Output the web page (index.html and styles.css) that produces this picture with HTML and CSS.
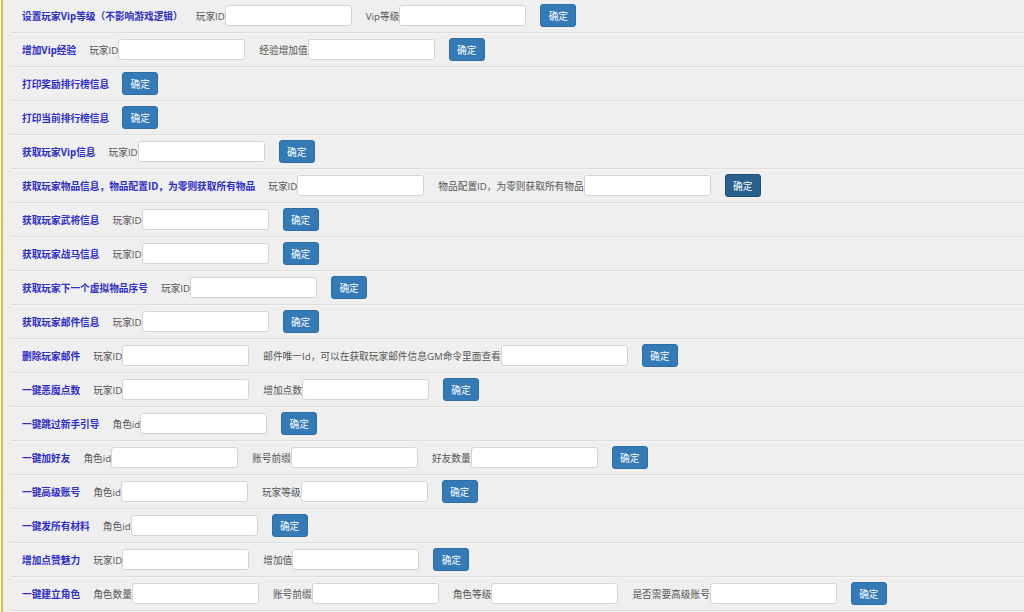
FILE: index.html
```html
<!DOCTYPE html>
<html lang="zh-CN">
<head>
<meta charset="utf-8">
<title>GM</title>
<link rel="stylesheet" href="styles.css">
</head>
<body>
<div class="page">
  <div class="row first"><span class="title">设置玩家Vip等级（不影响游戏逻辑）</span><span class="fl">玩家ID</span><input class="inp"><span class="fl">Vip等级</span><input class="inp"><button class="btn">确定</button></div>
  <div class="row"><span class="title">增加Vip经验</span><span class="fl">玩家ID</span><input class="inp"><span class="fl">经验增加值</span><input class="inp"><button class="btn">确定</button></div>
  <div class="row"><span class="title">打印奖励排行榜信息</span><button class="btn">确定</button></div>
  <div class="row"><span class="title">打印当前排行榜信息</span><button class="btn">确定</button></div>
  <div class="row"><span class="title">获取玩家Vip信息</span><span class="fl">玩家ID</span><input class="inp"><button class="btn">确定</button></div>
  <div class="row"><span class="title">获取玩家物品信息，物品配置ID，为零则获取所有物品</span><span class="fl">玩家ID</span><input class="inp"><span class="fl">物品配置ID，为零则获取所有物品</span><input class="inp"><button class="btn active">确定</button></div>
  <div class="row"><span class="title">获取玩家武将信息</span><span class="fl">玩家ID</span><input class="inp"><button class="btn">确定</button></div>
  <div class="row"><span class="title">获取玩家战马信息</span><span class="fl">玩家ID</span><input class="inp"><button class="btn">确定</button></div>
  <div class="row"><span class="title">获取玩家下一个虚拟物品序号</span><span class="fl">玩家ID</span><input class="inp"><button class="btn">确定</button></div>
  <div class="row"><span class="title">获取玩家邮件信息</span><span class="fl">玩家ID</span><input class="inp"><button class="btn">确定</button></div>
  <div class="row"><span class="title">删除玩家邮件</span><span class="fl">玩家ID</span><input class="inp"><span class="fl">邮件唯一Id，可以在获取玩家邮件信息GM命令里面查看</span><input class="inp"><button class="btn">确定</button></div>
  <div class="row"><span class="title">一键恶魔点数</span><span class="fl">玩家ID</span><input class="inp"><span class="fl">增加点数</span><input class="inp"><button class="btn">确定</button></div>
  <div class="row"><span class="title">一键跳过新手引导</span><span class="fl">角色id</span><input class="inp"><button class="btn">确定</button></div>
  <div class="row"><span class="title">一键加好友</span><span class="fl">角色id</span><input class="inp"><span class="fl">账号前缀</span><input class="inp"><span class="fl">好友数量</span><input class="inp"><button class="btn">确定</button></div>
  <div class="row"><span class="title">一键高级账号</span><span class="fl">角色id</span><input class="inp"><span class="fl">玩家等级</span><input class="inp"><button class="btn">确定</button></div>
  <div class="row"><span class="title">一键发所有材料</span><span class="fl">角色id</span><input class="inp"><button class="btn">确定</button></div>
  <div class="row"><span class="title">增加点赞魅力</span><span class="fl">玩家ID</span><input class="inp"><span class="fl">增加值</span><input class="inp"><button class="btn">确定</button></div>
  <div class="row"><span class="title">一键建立角色</span><span class="fl">角色数量</span><input class="inp"><span class="fl">账号前缀</span><input class="inp"><span class="fl">角色等级</span><input class="inp"><span class="fl">是否需要高级账号</span><input class="inp"><button class="btn">确定</button></div>
</div>
</body>
</html>
```

FILE: styles.css
```css
html {
  background: #ffffff;
}
body {
  margin: 0 0 0 1px;
  background: #efefef;
  border-left: 2px solid #d6c53c;
  min-height: 612px;
  font-family: "Open Sans", "Noto Sans CJK SC", sans-serif;
  font-size: 9.7px;
  overflow: hidden;
}
.page {
  margin-left: 8px;
  margin-top: -1px;
}
.row {
  box-sizing: border-box;
  height: 34px;
  display: flex;
  align-items: center;
  padding-left: 11px;
  border-bottom: 1px solid #dcdcdc;
  box-shadow: 0 1px 0 #f6f6f6;
}
.title {
  color: #2d2dc8;
  font-weight: bold;
  margin-right: 13px;
  white-space: nowrap;
}
.fl {
  color: #555555;
  white-space: nowrap;
}
.inp {
  box-sizing: border-box;
  width: 127px;
  height: 21px;
  margin: 0 14px 0 0;
  padding: 0 4px;
  background: #ffffff;
  border: 1px solid #d4d4d4;
  border-radius: 3px;
  font: inherit;
}
.btn {
  box-sizing: border-box;
  width: 36px;
  height: 23px;
  margin: 0;
  padding: 0;
  background: #337ab7;
  border: 1px solid #2e6da4;
  border-radius: 3px;
  color: #ffffff;
  font-family: "Open Sans", "Noto Sans CJK SC", sans-serif;
  font-size: 9.7px;
}
.btn.active {
  background: #286090;
  border-color: #204d74;
}
```
